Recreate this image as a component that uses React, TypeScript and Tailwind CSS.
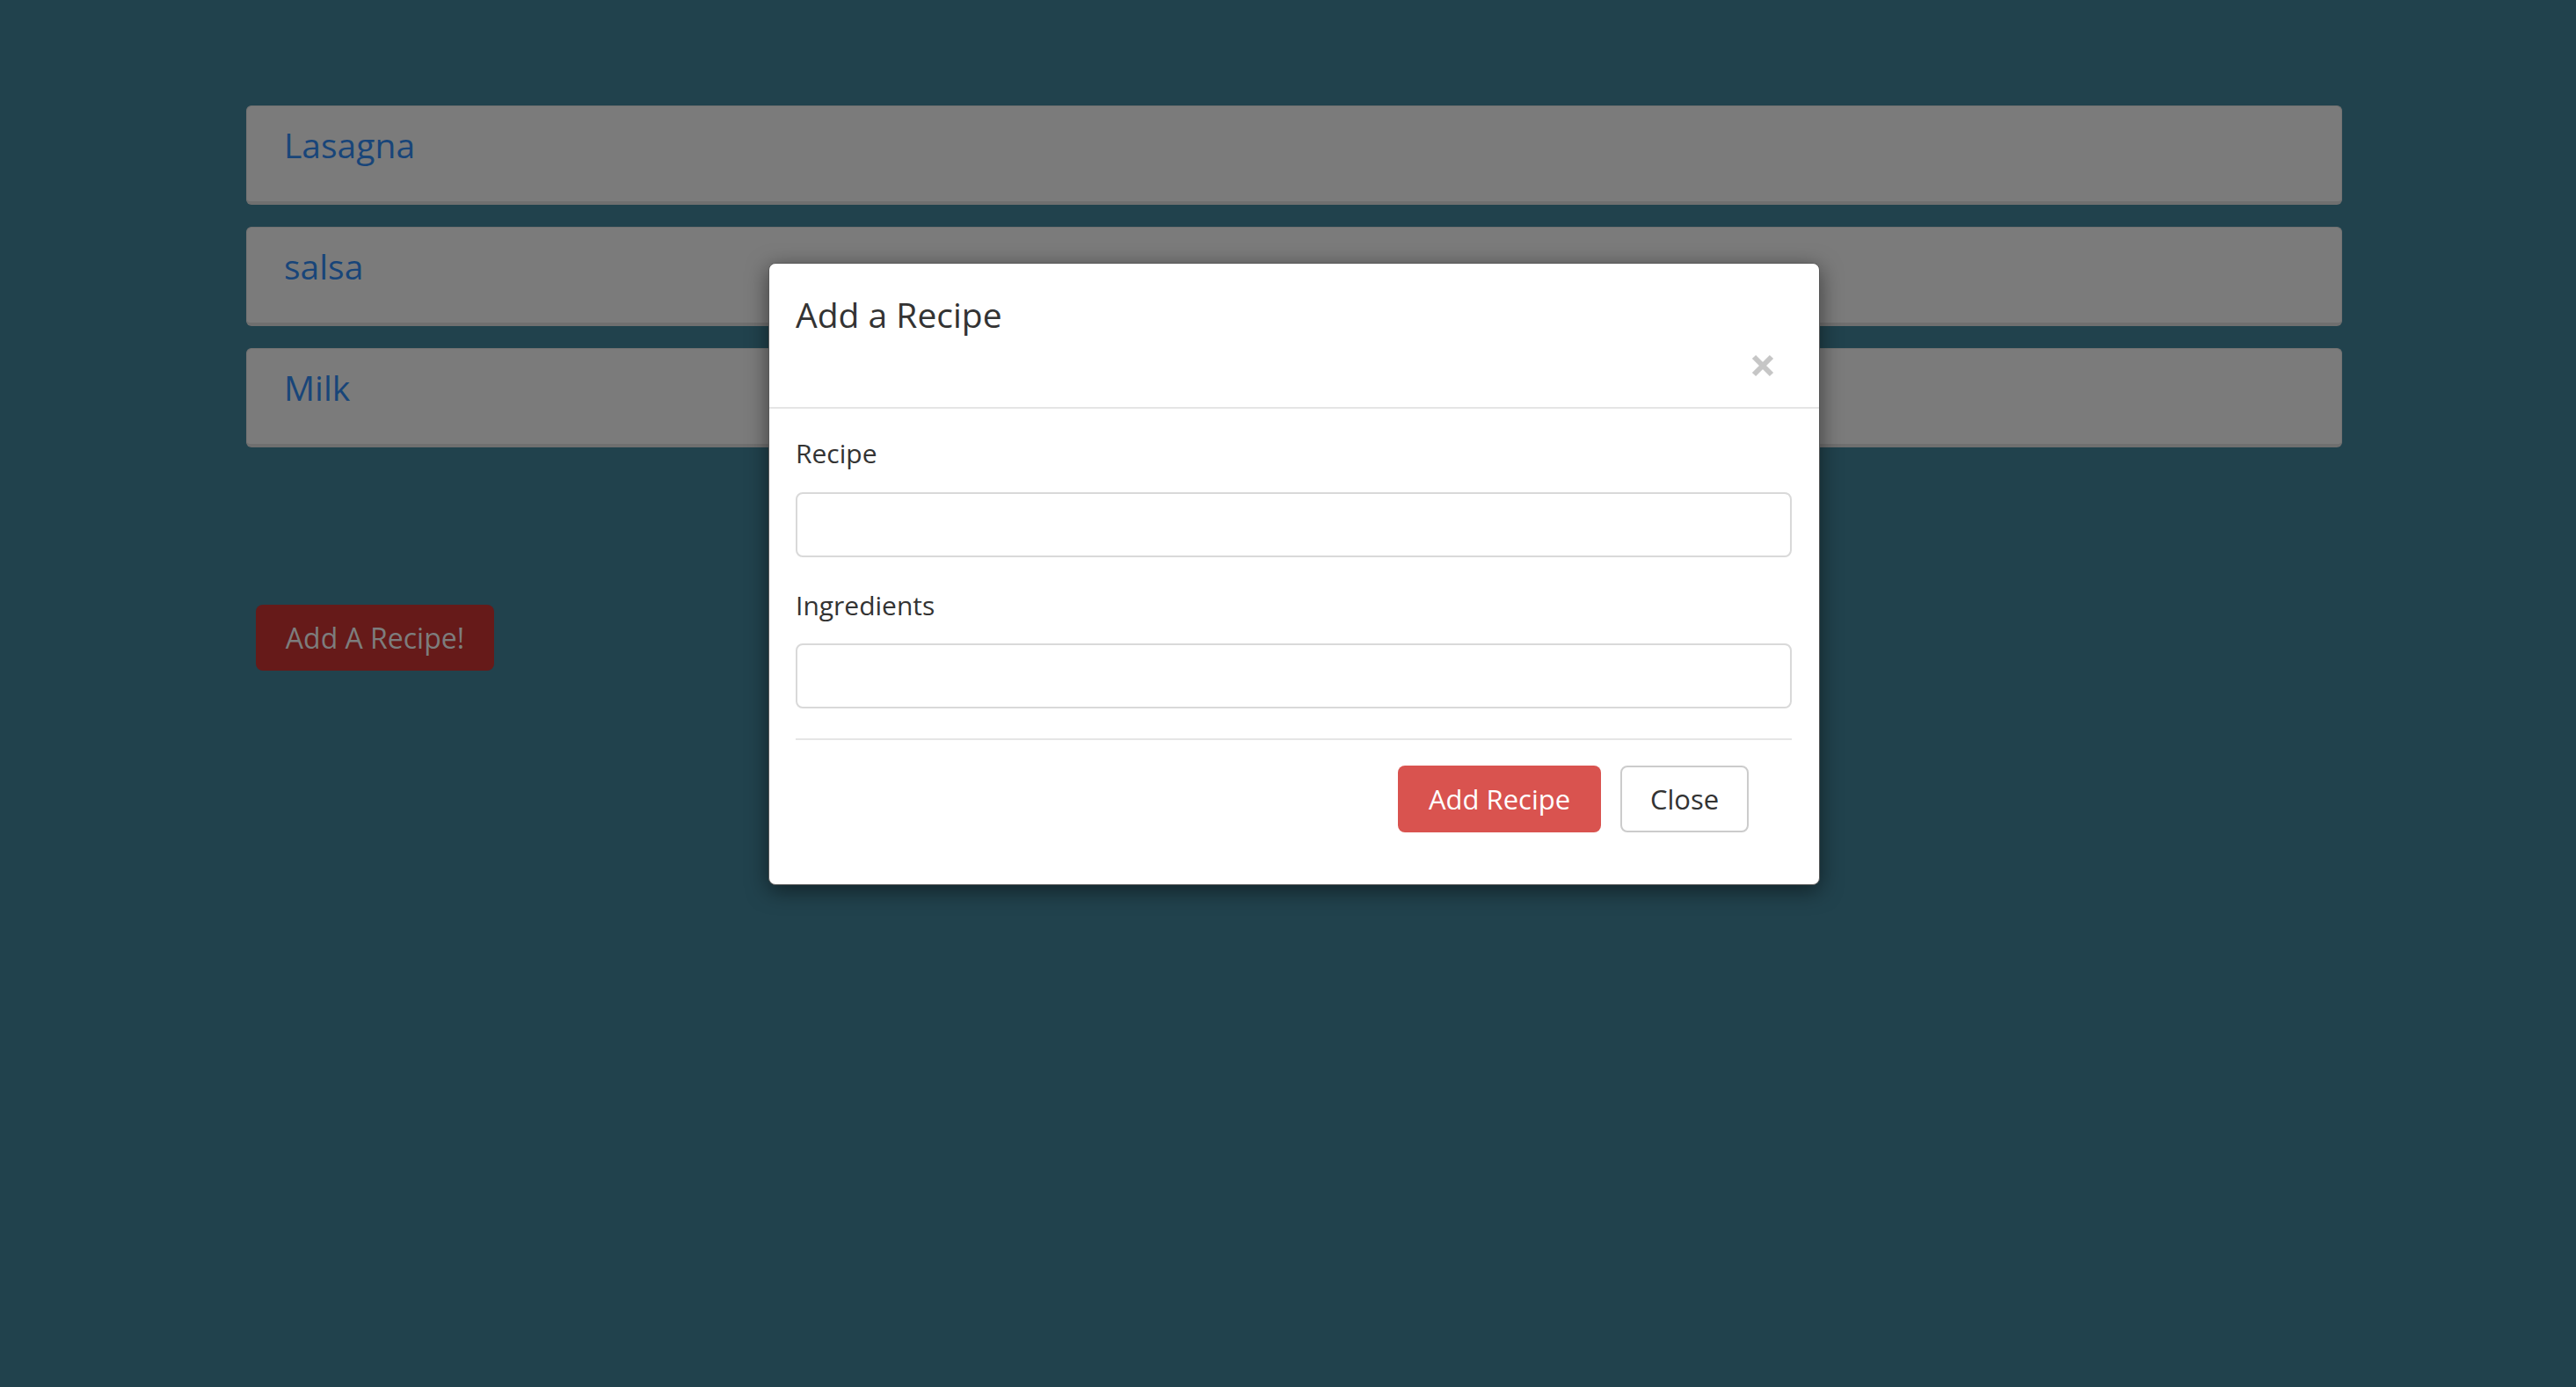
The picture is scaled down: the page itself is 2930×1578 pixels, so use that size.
const recipes = ['Lasagna', 'salsa', 'Milk'];

function RecipePanel({ name }: { name: string }) {
  return (
    <div className="h-[113px] rounded-[6px] border border-[#727272] border-b-4 border-b-[#6f6f6f] bg-[#7b7b7b] pl-[42px] pt-[24px]">
      <a className="text-[39px] leading-[39px] font-medium text-[#184579]">{name}</a>
    </div>
  );
}

function CloseIcon() {
  return (
    <svg width="26" height="26" viewBox="0 0 26 26">
      <path d="M3 3L23 23M23 3L3 23" stroke="#c6c6c6" strokeWidth={6} />
    </svg>
  );
}

function AddRecipeModal() {
  return (
    <div className="absolute left-[874px] top-[299px] w-[1196px] h-[708px] rounded-[8px] border border-[#5a5a5a] bg-white shadow-[0_6px_24px_rgba(0,0,0,0.5)]">
      <div className="h-[165px] border-b-2 border-[#e5e5e5] pl-[30px] pr-[51px] pt-[38px]">
        <h4 className="text-[39px] leading-[39px] text-[#333]">Add a Recipe</h4>
        <div className="mt-[26px] flex justify-end">
          <CloseIcon />
        </div>
      </div>
      <div className="pl-[30px] pr-[31px] pt-[36px]">
        <label className="block text-[30px] leading-[30px] text-[#333]">Recipe</label>
        <input className="mt-[29px] block h-[74px] w-full rounded-[8px] border-2 border-[#d9d9d9] outline-none" />
        <label className="mt-[40px] block text-[30px] leading-[30px] text-[#333]">Ingredients</label>
        <input className="mt-[28px] block h-[74px] w-full rounded-[8px] border-2 border-[#d9d9d9] outline-none" />
        <div className="mt-[34px] h-[2px] bg-[#e5e5e5]" />
        <div className="mt-[29px] flex justify-end gap-[22px] pr-[49px]">
          <button className="h-[76px] w-[231px] rounded-[8px] bg-[#d9534f] text-[31px] text-white">Add Recipe</button>
          <button className="h-[76px] w-[146px] rounded-[8px] border-2 border-[#cccccc] bg-white text-[31px] text-[#333]">Close</button>
        </div>
      </div>
    </div>
  );
}

export default function App() {
  return (
    <div
      className="relative min-h-[1578px] bg-[#21424d]"
      style={{ fontFamily: '"Open Sans", "Liberation Sans", sans-serif' }}
    >
      <div className="pl-[280px] pr-[266px] pt-[120px]">
        <div className="flex flex-col gap-[25px]">
          {recipes.map((r) => (
            <RecipePanel key={r} name={r} />
          ))}
        </div>
        <button className="ml-[11px] mt-[179px] h-[75px] w-[271px] rounded-[8px] bg-[#661a19] text-[32px] text-[#7d7d7d]">
          Add A Recipe!
        </button>
      </div>
      <AddRecipeModal />
    </div>
  );
}
